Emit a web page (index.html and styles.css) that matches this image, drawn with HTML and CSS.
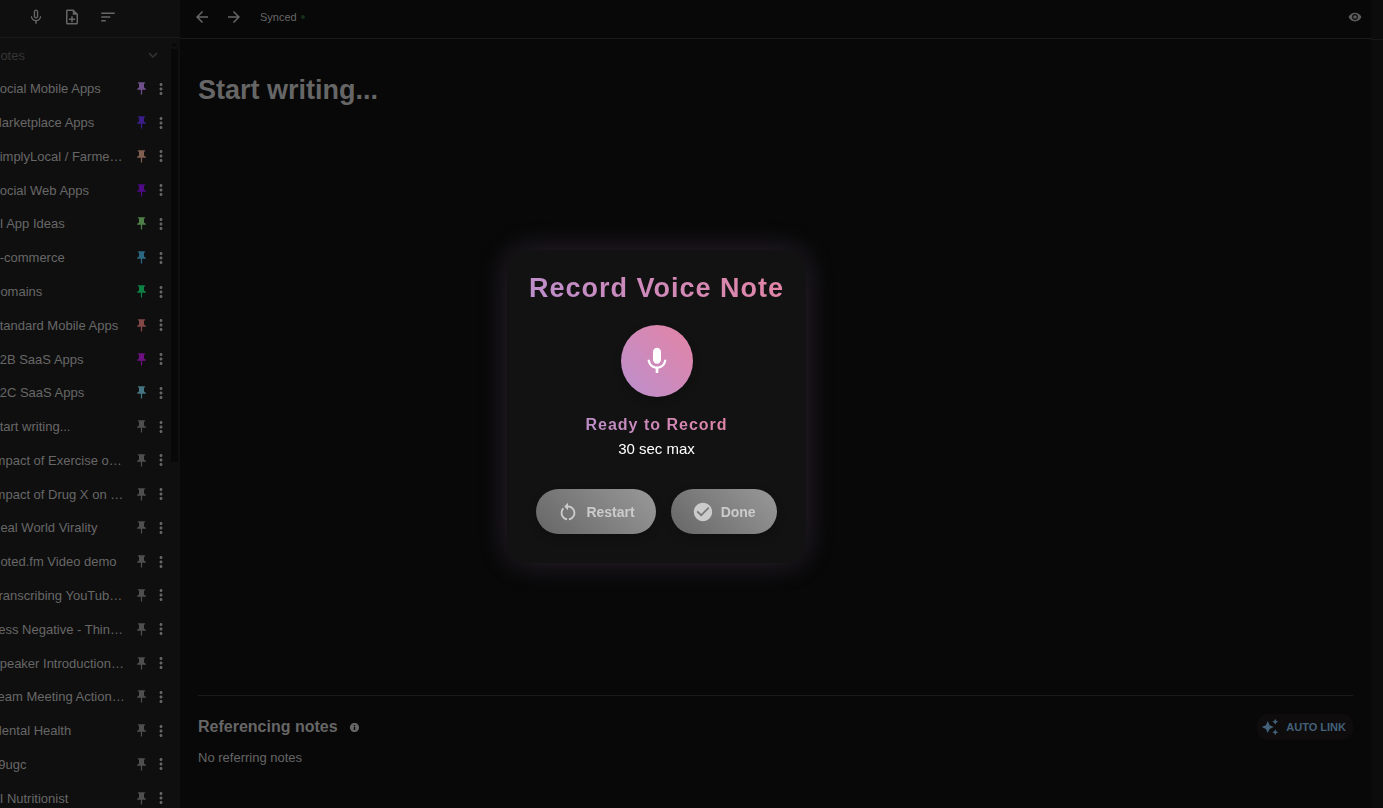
FILE: index.html
```html
<!DOCTYPE html>
<html lang="en">
<head>
<meta charset="utf-8">
<title>Notes</title>
<link rel="stylesheet" href="styles.css">
</head>
<body>
<svg class="sprite" aria-hidden="true">
  <symbol id="pin" viewBox="0 0 24 24"><path d="M16 9V4h1c.55 0 1-.45 1-1s-.45-1-1-1H7c-.55 0-1 .45-1 1s.45 1 1 1h1v5c0 1.66-1.34 3-3 3v2h5.97v7l1 1 1-1v-7H19v-2c-1.66 0-3-1.34-3-3z"/></symbol>
  <symbol id="more" viewBox="0 0 24 24"><path d="M12 8c1.1 0 2-.9 2-2s-.9-2-2-2-2 .9-2 2 .9 2 2 2zm0 2c-1.100 0-2 .9-2 2s.9 2 2 2 2-.9 2-2-.9-2-2-2zm0 6c-1.100 0-2 .9-2 2s.9 2 2 2 2-.9 2-2-.9-2-2-2z"/></symbol>
</svg>
<div class="app">
  <aside class="sidebar">
    <div class="tools">
      <button class="icon-btn" aria-label="Record"><svg class="icon" viewBox="0 0 24 24"><path d="M12 14c1.660 0 3-1.340 3-3V5c0-1.660-1.340-3-3-3S9 3.340 9 5v6c0 1.660 1.340 3 3 3zm-1.200-9.100c0-.66.54-1.200 1.200-1.200s1.200.54 1.200 1.200l-.01 6.200c0 .66-.53 1.200-1.190 1.200s-1.200-.54-1.200-1.200V4.900zm6.500 6.100c0 3-2.540 5.100-5.300 5.100S6.700 14 6.700 11H5c0 3.410 2.720 6.230 6 6.720V21h2v-3.280c3.280-.48 6-3.300 6-6.720h-1.700z"/></svg></button>
      <button class="icon-btn" aria-label="New note"><svg class="icon" viewBox="0 0 24 24"><path d="M14 2H6c-1.100 0-1.990.9-1.990 2L4 20c0 1.100.89 2 1.990 2H18c1.100 0 2-.9 2-2V8l-6-6zm4 18H6V4h7v5h5v11zm-7-1h2v-3h3v-2h-3v-3h-2v3H8v2h3z"/></svg></button>
      <button class="icon-btn" aria-label="Sort"><svg class="icon" viewBox="0 0 24 24"><path d="M3 18h6v-2H3v2zM3 6v2h18V6H3zm0 7h12v-2H3v2z"/></svg></button>
    </div>
    <div class="side-body">
      <div class="side-main">
        <button class="group">Notes<svg class="icon" viewBox="0 0 24 24"><path d="M16.590 8.590 12 13.170 7.410 8.590 6 10l6 6 6-6z"/></svg></button>
        <ul class="notes" id="notes"></ul>
      </div>
      <div class="scroll"><span class="scroll-arrow"></span><span class="scroll-thumb"></span></div>
    </div>
  </aside>
  <main class="main">
    <header class="topbar">
      <button class="icon-btn" aria-label="Back"><svg class="icon" viewBox="0 0 24 24"><path d="M20 11H7.830l5.590-5.590L12 4l-8 8 8 8 1.410-1.410L7.830 13H20v-2z"/></svg></button>
      <button class="icon-btn" aria-label="Forward"><svg class="icon" viewBox="0 0 24 24"><path d="m12 4-1.410 1.410L16.170 11H4v2h12.170l-5.580 5.590L12 20l8-8z"/></svg></button>
      <span class="sync">Synced</span><span class="dot"></span>
      <button class="icon-btn eye" aria-label="Preview"><svg class="icon eye-icon" viewBox="0 0 24 24"><path d="M12 4.500C7 4.500 2.730 7.610 1 12c1.730 4.390 6 7.500 11 7.500s9.270-3.110 11-7.500c-1.730-4.390-6-7.500-11-7.500zM12 17c-2.760 0-5-2.240-5-5s2.240-5 5-5 5 2.240 5 5-2.240 5-5 5zm0-8c-1.660 0-3 1.340-3 3s1.340 3 3 3 3-1.340 3-3-1.340-3-3-3z"/></svg></button>
    </header>
    <section class="editor"><h1>Start writing...</h1></section>
    <section class="refs">
      <div class="refs-head">
        <h2>Referencing notes</h2>
        <svg class="info" viewBox="0 0 24 24"><path d="M12 2C6.480 2 2 6.480 2 12s4.480 10 10 10 10-4.480 10-10S17.520 2 12 2zm1.500 15.500h-3V11h3v6.500zm0-8h-3v-3h3v3z"/></svg>
        <button class="auto"><svg class="icon" viewBox="0 0 24 24"><path d="m19 9 1.250-2.750L23 5l-2.750-1.250L19 1l-1.250 2.750L15 5l2.750 1.250zm-7.500.5L9 4 6.500 9.500 1 12l5.500 2.500L9 20l2.500-5.500L17 12zM19 15l-1.250 2.750L15 19l2.750 1.250L19 23l1.250-2.750L23 19l-2.750-1.250z"/></svg>AUTO LINK</button>
      </div>
      <p>No referring notes</p>
    </section>
  </main>
  <div class="rail"></div>
</div>
<div class="backdrop">
  <div class="dialog" role="dialog" aria-labelledby="dlg">
    <h2 class="dlg-title" id="dlg">Record Voice Note</h2>
    <button class="mic" aria-label="Start recording"><svg viewBox="0 0 24 24"><path d="M12 14c1.660 0 2.990-1.340 2.990-3L15 5c0-1.660-1.340-3-3-3S9 3.340 9 5v6c0 1.660 1.340 3 3 3zm5.300-3c0 3-2.540 5.100-5.300 5.100S6.700 14 6.700 11H5c0 3.410 2.720 6.230 6 6.720V21h2v-3.280c3.280-.48 6-3.300 6-6.720h-1.700z"/></svg></button>
    <p class="status">Ready to Record</p>
    <p class="limit">30 sec max</p>
    <div class="actions">
      <button class="pill"><svg viewBox="0 0 24 24"><path d="M12 5V2L8 6l4 4V7c3.310 0 6 2.690 6 6 0 2.970-2.170 5.430-5 5.910v2.020c3.950-.49 7-3.850 7-7.930 0-4.420-3.580-8-8-8zm-6 8c0-1.650.67-3.150 1.760-4.240L6.340 7.340C4.900 8.790 4 10.790 4 13c0 4.080 3.050 7.440 7 7.930v-2.020c-2.830-.48-5-2.940-5-5.910z"/></svg>Restart</button>
      <button class="pill"><svg viewBox="0 0 24 24"><path d="M12 2C6.480 2 2 6.480 2 12s4.480 10 10 10 10-4.480 10-10S17.520 2 12 2zm-2 15-5-5 1.410-1.410L10 14.170l7.590-7.590L19 8l-9 9z"/></svg>Done</button>
    </div>
  </div>
</div>
<script src="notes.js"></script>
</body>
</html>
```
FILE: styles.css
```css
* { box-sizing: border-box; }
html, body { height: 100%; }
body {
  margin: 0;
  overflow: hidden;
  background: #080808;
  color: #666;
  font-family: "Liberation Sans", Arial, sans-serif;
  font-size: 13px;
}
h1, h2, p, ul { margin: 0; padding: 0; }
button {
  border: 0;
  padding: 0;
  background: none;
  color: inherit;
  font: inherit;
}
svg { fill: currentColor; flex: none; }
.sprite { display: none; }
.icon { width: 18px; height: 18px; display: block; }
.icon-btn { display: flex; padding: 0; }

.app { display: flex; height: 100%; }

/* The sidebar is scrolled partly out of the window on the left. */
.sidebar {
  width: 250px;
  margin-left: -70px;
  flex: none;
  display: flex;
  flex-direction: column;
  background: #0f0f0f;
}
.tools {
  height: 38px;
  flex: none;
  display: flex;
  gap: 18px;
  padding: 8px 0 0 97px;
  border-bottom: 1px solid #191919;
}
.side-body { flex: 1; min-height: 0; display: flex; }
.side-main { flex: 1; min-width: 0; }
.group {
  display: flex;
  align-items: center;
  justify-content: space-between;
  width: 100%;
  height: 34px;
  padding: 0 9px 0 61px;
  color: #353535;
}
.notes {
  list-style: none;
  display: grid;
  grid-auto-rows: 1fr;
  height: 743px;
}
.note {
  display: flex;
  align-items: center;
  padding: 0 1px 0 61px;
}
.note-title {
  flex: 1;
  min-width: 0;
  white-space: nowrap;
  overflow: hidden;
  color: #676767;
}
.note .pin { width: 15px; height: 15px; margin-right: 3px; display: block; }
.note .more { width: 18px; height: 18px; display: block; }
.scroll {
  width: 9px;
  flex: none;
  display: flex;
  flex-direction: column;
  align-items: flex-start;
  padding-top: 5px;
}
.scroll-arrow {
  width: 6px;
  border: 3px solid transparent;
  border-top: 0;
  border-bottom: 3px solid #060606;
}
.scroll-thumb { width: 7px; height: 413px; margin-top: 3px; background: #080808; }

.main {
  flex: 1;
  min-width: 0;
  display: flex;
  flex-direction: column;
}
.topbar {
  height: 39px;
  flex: none;
  display: flex;
  align-items: center;
  padding: 0 8px 4px 13px;
  border-bottom: 1px solid #1a1a1a;
}
.topbar .icon-btn + .icon-btn { margin-left: 14px; }
.sync { font-size: 11px; margin-left: 17px; }
.dot { width: 4px; height: 4px; margin-left: 4px; border-radius: 50%; background: #16301a; }
.eye { margin-left: auto; color: #5c5c5c; }
.eye-icon { width: 14px; height: 14px; }
.topbar .eye { padding-right: 1px; }
.editor { flex: 1; padding: 35px 18px; }
h1 { font-size: 27px; line-height: 32px; color: #666; }
.refs {
  height: 113px;
  margin: 0 18px;
  border-top: 1px solid #1a1a1a;
  padding-top: 18px;
}
.refs-head { display: flex; align-items: center; height: 26px; }
.refs-head h2 { font-size: 16px; line-height: 20px; }
.info { width: 11px; height: 11px; margin-left: 11px; }
.auto {
  display: flex;
  align-items: center;
  gap: 7px;
  height: 26px;
  margin-left: auto;
  padding: 0 7px 0 4px;
  border-radius: 10px;
  background: #0e0c0d;
  color: #436179;
  font-size: 11px;
  font-weight: bold;
}
.refs p { margin-top: 10px; line-height: 16px; }
.rail { width: 12px; flex: none; background: #0c0c0c; padding-top: 39px; }
.rail::before { content: ""; display: block; height: 1px; background: #171717; }

/* Same extent as the page behind it, including the part scrolled away. */
.backdrop {
  position: fixed;
  inset: 0 0 -5px -70px;
  display: flex;
  align-items: center;
  justify-content: center;
}
.dialog {
  padding: 20px 22px 29px;
  display: flex;
  flex-direction: column;
  align-items: center;
  border-radius: 20px;
  background: #121212;
  box-shadow: 0 0 30px rgba(187, 143, 206, 0.2);
}
.dlg-title, .status {
  background: linear-gradient(45deg, #bb8fce, #e484a4);
  -webkit-background-clip: text;
  background-clip: text;
  color: transparent;
  font-weight: 600;
  letter-spacing: 1px;
}
.dlg-title { font-size: 27px; line-height: 36px; }
.mic {
  width: 72px;
  height: 72px;
  margin-top: 19px;
  display: flex;
  align-items: center;
  justify-content: center;
  border-radius: 50%;
  background: linear-gradient(45deg, #bb8fce, #e484a4);
  color: #fff;
  box-shadow: 0 4px 10px rgba(0, 0, 0, 0.2);
}
.mic svg { width: 32px; height: 32px; }
.status { margin-top: 16px; font-size: 16px; line-height: 24px; }
.limit { margin-top: 3px; font-size: 15px; line-height: 18px; color: #fff; }
.actions { display: flex; gap: 15px; margin-top: 31px; }
.pill {
  display: flex;
  align-items: center;
  gap: 7px;
  height: 45px;
  padding: 0 21px;
  border-radius: 23px;
  background: linear-gradient(45deg, #666, #999);
  color: #cbcbcb;
  font-size: 14px;
  font-weight: bold;
  box-shadow: 0 4px 10px rgba(0, 0, 0, 0.2);
}
.pill svg { width: 22px; height: 22px; }
```
FILE: notes.js
```js
const notes = [
  ["Social Mobile Apps", "#70508a"],
  ["Marketplace Apps", "#3a1d86"],
  ["SimplyLocal / Farme…", "#805f50"],
  ["Social Web Apps", "#4f0a86"],
  ["AI App Ideas", "#4f7f48"],
  ["E-commerce", "#2b6780"],
  ["Domains", "#0d8043"],
  ["Standard Mobile Apps", "#824747"],
  ["B2B SaaS Apps", "#6d1180"],
  ["B2C SaaS Apps", "#457582"],
  ["Start writing...", ""],
  ["Impact of Exercise o…", ""],
  ["Impact of Drug X on …", ""],
  ["Real World Virality", ""],
  ["Noted.fm Video demo", ""],
  ["Transcribing YouTub…", ""],
  ["Less Negative - Thin…", ""],
  ["Speaker Introduction…", ""],
  ["Team Meeting Action…", ""],
  ["Mental Health", ""],
  ["69ugc", ""],
  ["AI Nutritionist", ""]
];

document.getElementById("notes").innerHTML = notes.map(([title, color]) => `
  <li class="note">
    <span class="note-title">${title}</span>
    <button aria-label="Pin"><svg class="pin" style="color:${color || "#4f4f4f"}"><use href="#pin"/></svg></button>
    <button aria-label="More"><svg class="more"><use href="#more"/></svg></button>
  </li>`).join("");
```
